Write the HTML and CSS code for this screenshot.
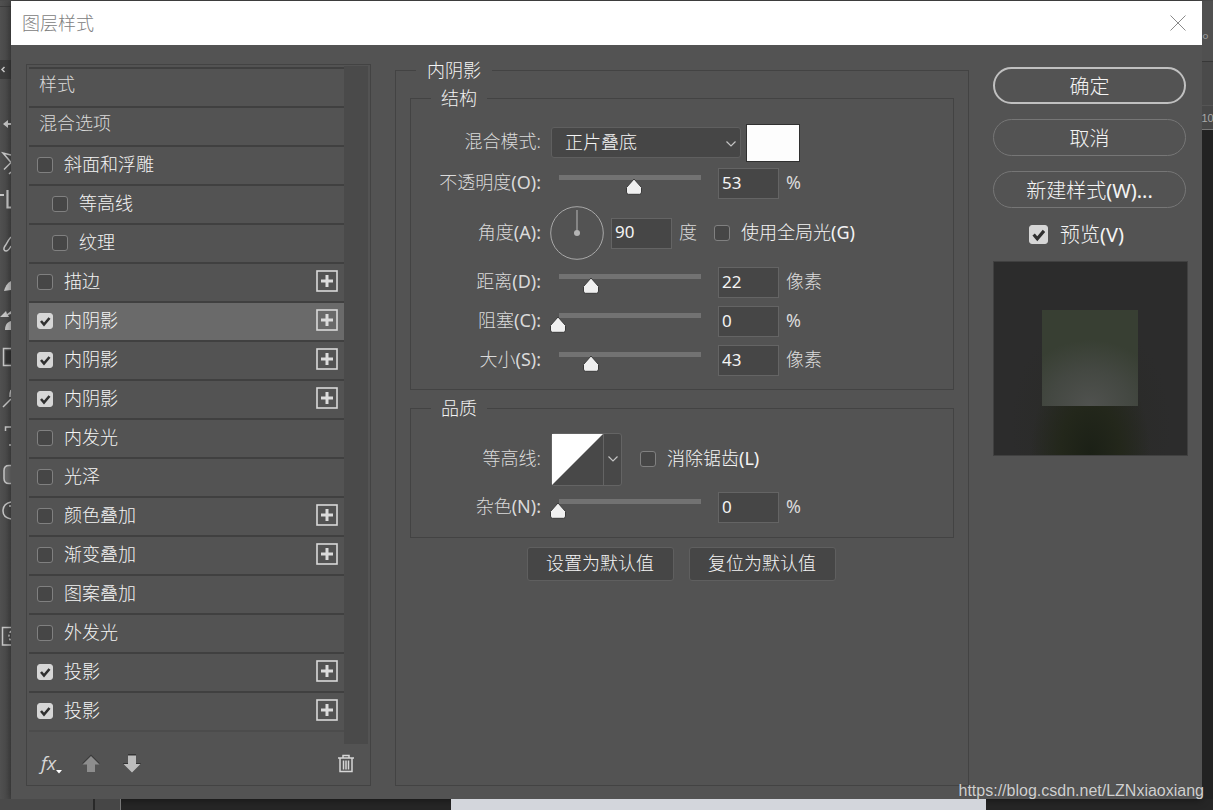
FILE: index.html
```html
<!DOCTYPE html>
<html lang="zh-CN">
<head>
<meta charset="utf-8">
<meta name="viewport" content="width=device-width, initial-scale=1">
<title>图层样式</title>
<link rel="stylesheet" href="styles.css">
</head>
<body>
<svg class="defs" aria-hidden="true">
  <symbol id="plus" viewBox="0 0 22 22"><rect x="1" y="1" width="20" height="20" fill="none" stroke="#d9d9d9" stroke-width="1.6"/><path d="M11 5v12M5 11h12" stroke="#dcdcdc" stroke-width="3" fill="none"/></symbol>
  <symbol id="chevron" viewBox="0 0 10 6"><path d="M.5 .5 5 5 9.500 .5" fill="none" stroke="#c4c4c4" stroke-width="1.2"/></symbol>
</svg>
<div class="workspace">
  <div class="app-top"></div>
  <aside class="rail">
    <svg class="rail-art" width="11" height="798" viewBox="0 1 11 798" fill="none" stroke="#c8c8c8" stroke-width="1.5">
      <path d="M0 6.500h11" stroke="#3c3c3c" stroke-width="1"/>
      <path d="M0 60h11v19H0z" fill="#3c3c3c" stroke="none"/>
      <path d="M4.500 67 2 69.500 4.500 72"/>
      <path d="M3 124l5-4v3h3v2H8v3z" fill="#c8c8c8" stroke="none"/>
      <path d="M11 155 3 153l8 9.500-7 7M9 174l2-2"/>
      <path d="M0 195h4M7.500 190v17.500H11" stroke-width="2.200"/>
      <path d="M11 237c-2 2-4 6-6 9s-1 5 1 5 4-3 5-5"/>
      <path d="M4 291c1-4 3-8 7-10v9z" fill="#c8c8c8" stroke="none"/>
      <path d="M0 317l6-6 1 3 4-3v3l-3 1 1 2z" fill="#c8c8c8" stroke="none"/>
      <path d="M5 330c0-5 2-8 6-9v9z" fill="#c8c8c8" stroke="none"/>
      <path d="M11 348.500H3.500v17H11"/>
      <path d="M5.500 350.500H11v13H5.500z" fill="#333" stroke="none"/>
      <path d="M3 407l8-8M10 397c0-3 0-5 1-7"/>
      <path d="M5.500 431v-4H11M9 445h2"/>
      <path d="M11 465.500H9q-5 0-5 5v8q0 5 5 5h2" fill="#6b6b6b"/>
      <path d="M11 502c-5 1-8 4-8 9s3 7 8 8M9 506h2"/>
      <path d="M11 627.500H2.500v17.500H11"/>
      <path d="M11 631q-4 5 0 10" stroke-dasharray="2 2"/>
    </svg>
  </aside>

  <main class="dialog">
    <header class="titlebar">
      <h1 class="title">图层样式</h1>
      <button class="close" type="button" aria-label="关闭"><svg width="16" height="16" viewBox="0 0 16 16"><path d="M.5 .5l15 15M15.500 .5l-15 15" stroke="#8a8a8a" fill="none"/></svg></button>
    </header>

    <form class="content">
      <section class="styles">
        <div class="list-wrap">
          <ul class="list">
            <li class="row row-text">样式</li>
            <li class="row row-text">混合选项</li>
            <li class="row"><label class="check"><input class="box" type="checkbox">斜面和浮雕</label></li>
            <li class="row row-sub"><label class="check"><input class="box" type="checkbox">等高线</label></li>
            <li class="row row-sub"><label class="check"><input class="box" type="checkbox">纹理</label></li>
            <li class="row"><label class="check"><input class="box" type="checkbox">描边</label><button class="add" type="button" aria-label="添加描边"><svg width="22" height="22"><use href="#plus"/></svg></button></li>
            <li class="row row-selected"><label class="check"><input class="box" type="checkbox" checked>内阴影</label><button class="add" type="button" aria-label="添加内阴影"><svg width="22" height="22"><use href="#plus"/></svg></button></li>
            <li class="row"><label class="check"><input class="box" type="checkbox" checked>内阴影</label><button class="add" type="button" aria-label="添加内阴影"><svg width="22" height="22"><use href="#plus"/></svg></button></li>
            <li class="row"><label class="check"><input class="box" type="checkbox" checked>内阴影</label><button class="add" type="button" aria-label="添加内阴影"><svg width="22" height="22"><use href="#plus"/></svg></button></li>
            <li class="row"><label class="check"><input class="box" type="checkbox">内发光</label></li>
            <li class="row"><label class="check"><input class="box" type="checkbox">光泽</label></li>
            <li class="row"><label class="check"><input class="box" type="checkbox">颜色叠加</label><button class="add" type="button" aria-label="添加颜色叠加"><svg width="22" height="22"><use href="#plus"/></svg></button></li>
            <li class="row"><label class="check"><input class="box" type="checkbox">渐变叠加</label><button class="add" type="button" aria-label="添加渐变叠加"><svg width="22" height="22"><use href="#plus"/></svg></button></li>
            <li class="row"><label class="check"><input class="box" type="checkbox">图案叠加</label></li>
            <li class="row"><label class="check"><input class="box" type="checkbox">外发光</label></li>
            <li class="row"><label class="check"><input class="box" type="checkbox" checked>投影</label><button class="add" type="button" aria-label="添加投影"><svg width="22" height="22"><use href="#plus"/></svg></button></li>
            <li class="row"><label class="check"><input class="box" type="checkbox" checked>投影</label><button class="add" type="button" aria-label="添加投影"><svg width="22" height="22"><use href="#plus"/></svg></button></li>
          </ul>
          <div class="scrollbar"></div>
        </div>
        <div class="tools">
          <button class="tool tool-fx" type="button"><span class="fx">fx</span><svg width="6" height="4" viewBox="0 0 6 4"><path d="M0 0h6L3 3.500z" fill="#fff"/></svg></button>
          <button class="tool" type="button" aria-label="上移"><svg width="18" height="19" viewBox="0 0 18 19"><path d="M0 9.500 9 .5l9 9z" fill="#3a3a3a"/><path d="M.5 10.500 9 2l8.500 8.500H13V18H5v-7.500z" fill="#8d8d8d"/></svg></button>
          <button class="tool" type="button" aria-label="下移"><svg width="18" height="19" viewBox="0 0 18 19"><path d="M5 0h8v9h5l-1 2H1L0 9h5z" fill="#333"/><path d="M5 1.500h8V10h4.500L9 18.500.5 10H5z" fill="#bdbdbd"/></svg></button>
          <button class="tool tool-trash" type="button" aria-label="删除"><svg width="16" height="19" viewBox="0 0 16 19" fill="none" stroke="#d6d6d6" stroke-width="1.500"><path d="M0 4h16M5 4V1.500h6V4M2 4v13.500h12V4M5.500 6.500v9M8 6.500v9M10.500 6.500v9"/></svg></button>
        </div>
      </section>

      <fieldset class="group group-main">
        <legend class="legend">内阴影</legend>
        <fieldset class="group group-structure">
          <legend class="legend legend-inner">结构</legend>
          <div class="field field-blend">
            <label class="name" for="blend">混合模式:</label>
            <div class="controls">
              <span class="select-wrap"><select class="select" id="blend"><option>正片叠底</option></select><svg class="select-arrow" width="10" height="6"><use href="#chevron"/></svg></span>
              <button class="swatch" type="button" aria-label="阴影颜色"></button>
            </div>
          </div>
          <div class="field">
            <label class="name" for="opacity">不透明度<span class="key">(O):</span></label>
            <div class="controls"><input class="slider" type="range" min="0" max="100" value="53" aria-label="不透明度"><input class="number" id="opacity" type="text" value="53"><span class="unit key">%</span></div>
          </div>
          <div class="field field-angle">
            <label class="name" for="angle">角度<span class="key">(A):</span></label>
            <div class="controls">
              <svg class="dial" width="54" height="54" viewBox="0 0 54 54"><circle cx="27" cy="27" r="26.300" fill="none" stroke="#a8a8a8"/><path d="M27 4v23" stroke="#8c8c8c" stroke-width="1.800"/><circle cx="27" cy="27" r="3" fill="#b4b4b4"/></svg>
              <input class="number" id="angle" type="text" value="90"><span class="unit">度</span>
              <label class="check check-angle"><input class="box" type="checkbox"><span class="caption">使用全局光<span class="key">(G)</span></span></label>
            </div>
          </div>
          <div class="field">
            <label class="name" for="distance">距离<span class="key">(D):</span></label>
            <div class="controls"><input class="slider" type="range" min="0" max="95" value="22" aria-label="距离"><input class="number" id="distance" type="text" value="22"><span class="unit">像素</span></div>
          </div>
          <div class="field">
            <label class="name" for="choke">阻塞<span class="key">(C):</span></label>
            <div class="controls"><input class="slider" type="range" min="0" max="100" value="0" aria-label="阻塞"><input class="number" id="choke" type="text" value="0"><span class="unit key">%</span></div>
          </div>
          <div class="field">
            <label class="name" for="size">大小<span class="key">(S):</span></label>
            <div class="controls"><input class="slider" type="range" min="0" max="187" value="43" aria-label="大小"><input class="number" id="size" type="text" value="43"><span class="unit">像素</span></div>
          </div>
        </fieldset>

        <fieldset class="group group-quality">
          <legend class="legend legend-inner">品质</legend>
          <div class="field field-contour">
            <span class="name">等高线:</span>
            <div class="controls">
              <button class="contour" type="button" aria-label="等高线"><svg class="contour-curve" width="51" height="51" viewBox="0 0 51 51"><path d="M0 0h51L0 51z" fill="#fff"/></svg><span class="contour-drop"><svg width="10" height="6"><use href="#chevron"/></svg></span></button>
              <label class="check check-contour"><input class="box" type="checkbox"><span class="caption">消除锯齿<span class="key">(L)</span></span></label>
            </div>
          </div>
          <div class="field">
            <label class="name" for="noise">杂色<span class="key">(N):</span></label>
            <div class="controls"><input class="slider" type="range" min="0" max="100" value="0" aria-label="杂色"><input class="number" id="noise" type="text" value="0"><span class="unit key">%</span></div>
          </div>
        </fieldset>
        <div class="defaults">
          <button class="btn" type="button">设置为默认值</button>
          <button class="btn" type="button">复位为默认值</button>
        </div>
      </fieldset>

      <section class="side">
        <button class="pill pill-primary" type="button">确定</button>
        <button class="pill" type="button">取消</button>
        <button class="pill" type="button">新建样式<span class="key">(W)...</span></button>
        <label class="check check-preview"><input class="box box-large" type="checkbox" checked><span>预览<span class="key">(V)</span></span></label>
        <div class="preview"><div class="preview-square"></div></div>
      </section>
    </form>
  </main>

  <aside class="edge">
    <div class="edge-bar">°</div>
    <div class="edge-tabs"></div>
    <div class="edge-ruler"><span class="edge-mark">10</span></div>
  </aside>
  <div class="app-bottom"><div class="bottom-rail"></div><div class="bottom-ruler"></div><div class="bottom-dark"></div><div class="bottom-canvas"></div></div>
  <div class="watermark">https://blog.csdn.net/LZNxiaoxiang</div>
</div>
</body>
</html>
```
FILE: styles.css
```css
* { box-sizing: border-box; }

body {
  margin: 0;
  background: #262626;
  color: #f4f4f4;
  font: 300 18px/20px "Noto Sans", "Noto Sans CJK SC", sans-serif;
}

button, input, select { font: inherit; color: inherit; margin: 0; }
button { padding: 0; border: 0; background: none; }
svg { display: block; }
.defs { position: absolute; width: 0; height: 0; }
.key { font-weight: 400; }

.workspace {
  position: relative;
  display: grid;
  grid-template-columns: 11px minmax(0, 1fr) 11px;
  grid-template-rows: 1px 1fr 11px;
  min-height: 100vh;
  overflow: hidden;
}
.app-top { grid-column: 1 / -1; background: #4a4a4a; }
.rail { background: linear-gradient(90deg, #505050, #484848); overflow: hidden; }

/* Dialog window */
.dialog {
  display: flex;
  flex-direction: column;
  background: #535353;
  box-shadow: 0 1px 8px rgba(0, 0, 0, .45);
}
.titlebar {
  display: flex;
  align-items: center;
  justify-content: space-between;
  height: 44px;
  padding: 0 16px 1px 11px;
  background: #fff;
}
.title { margin: 0; font-size: 18px; font-weight: 300; color: #808080; }
.content {
  flex: 1;
  display: grid;
  grid-template-columns: 345px minmax(0, 1fr) 195px;
  gap: 24px;
  padding: 15px 14px 13px 15px;
}

/* Style list */
.styles {
  display: flex;
  flex-direction: column;
  margin-top: 4px;
  padding: 1px 2px;
  border: 1px solid #434343;
}
.list-wrap { display: flex; }
.list {
  flex: 1;
  margin: 0;
  padding: 1px 0 0;
  list-style: none;
}
.row {
  display: flex;
  align-items: center;
  justify-content: space-between;
  height: 39px;
  padding: 0 6px 4px 8px;
  border-bottom: 2px solid #404040;
}
.row:first-child { height: 41px; border-top: 2px solid #404040; }
.row:last-child { border-bottom-color: #4c4c4c; }
.row-text { padding: 0 10px 7px; color: #dadada; }
.row-sub { padding-left: 23px; }
.row-selected { background: #6a6a6a; }
.check { display: flex; align-items: center; gap: 11px; }
.box {
  appearance: none;
  flex: none;
  width: 16px;
  height: 16px;
  border: 1px solid #808080;
  border-radius: 3px;
  background: #464646;
}
.row .box { margin-top: 2px; }
.box:checked {
  border-color: #d6d6d6;
  background: #d6d6d6 url("data:image/svg+xml,%3Csvg xmlns='http://www.w3.org/2000/svg' viewBox='0 0 14 14'%3E%3Cpath d='M3 7l3 3.500 5.500-6.500' fill='none' stroke='%23303030' stroke-width='2.600'/%3E%3C/svg%3E") center / 100% no-repeat;
}
.scrollbar { width: 24px; margin-bottom: -12px; background: #4a4a4a; }
.tools {
  display: flex;
  align-items: center;
  gap: 23px;
  margin-top: auto;
  padding: 0 14px 10px 12px;
}
.tool-fx { display: flex; align-items: flex-end; width: 18px; color: #d6d6d6; }
.tool-fx svg { flex: none; }
.fx { font: italic 400 19px/22px "Open Sans", "Noto Sans", sans-serif; }
.tool-trash { margin-left: auto; }

/* Settings */
.group { min-width: 0; margin: 0; padding: 0; border: 1px solid #434343; }
.group-main { padding: 8px 14px 0; }
.group-main > .legend { margin-left: 6px; }
.group-structure { padding: 13px 0 9px; }
.group-quality { margin-top: 8px; padding: 12px 0 10px; }
.legend { margin-left: 20px; padding: 0 11px; }
.legend-inner { padding: 0 10px; }
.field {
  display: grid;
  grid-template-columns: 130px 1fr;
  gap: 9px;
  align-items: center;
  height: 39px;
}
.field-blend { height: 43px; }
.field-angle { height: 60px; }
.field-contour { height: 58px; }
.name { padding-bottom: 3px; color: #dadada; text-align: right; white-space: nowrap; }
.controls { display: flex; align-items: center; }
.unit { margin-left: 7px; padding-bottom: 3px; color: #dadada; }

.select-wrap { position: relative; width: 190px; margin: 0 5px 0 1px; }
.select {
  appearance: none;
  display: block;
  width: 100%;
  height: 31px;
  padding: 0 30px 2px 13px;
  border: 1px solid #5f5f5f;
  border-radius: 3px;
  background: #464646;
}
.select-arrow { position: absolute; right: 5px; top: 14px; pointer-events: none; }
.swatch { width: 54px; height: 38px; border: 1px solid #303030; background: #fdfdfd; }

.slider {
  appearance: none;
  width: 159px;
  height: 24px;
  margin-right: 9px;
  background: linear-gradient(#727272, #727272) 9px 3px / 142px 5px no-repeat;
}
.slider::-webkit-slider-runnable-track { height: 24px; }
.slider::-webkit-slider-thumb {
  appearance: none;
  width: 16px;
  height: 17px;
  margin-top: 6px;
  background: url("data:image/svg+xml,%3Csvg xmlns='http://www.w3.org/2000/svg' viewBox='0 0 16 17'%3E%3Cpath d='M8 1L15.500 9.500V14Q15.500 16.300 13.500 16.300H2.500Q.5 16.300 .5 14V9.500Z' fill='%23f0f0f0' stroke='%23393939'/%3E%3C/svg%3E") no-repeat;
}
.number {
  width: 61px;
  height: 31px;
  padding: 0 3px 3px;
  border: 1px solid #646464;
  background: #464646;
  font-size: 17px;
  font-weight: 400;
}
.dial { margin-right: 7px; }
.caption { padding-bottom: 3px; }
.check-angle { margin-left: 17px; }

.contour {
  display: flex;
  width: 71px;
  height: 53px;
  margin-left: 1px;
  border: 1px solid #646464;
  border-radius: 3px;
  background: #484848;
}
.contour-drop {
  display: grid;
  place-items: center;
  width: 18px;
  height: 51px;
  border-left: 1px solid #646464;
}
.check-contour { margin-left: 18px; }

.defaults { display: flex; justify-content: center; gap: 15px; margin: 9px 2px 0 0; }
.btn {
  width: 147px;
  height: 34px;
  padding-bottom: 2px;
  border: 1px solid #5f5f5f;
  border-radius: 3px;
  background: #464646;
}

/* Actions and preview */
.side { display: flex; flex-direction: column; gap: 15px; padding-top: 7px; font-size: 20px; }
.pill {
  height: 37px;
  padding-top: 2px;
  border: 1px solid #767676;
  border-radius: 19px;
  margin-right: 2px;
}
.pill-primary { border: 2px solid #c0c0c0; }
.check-preview { gap: 12px; margin-left: 36px; height: 23px; }
.box-large { width: 19px; height: 19px; }
.preview {
  display: grid;
  place-items: center;
  height: 195px;
  padding: 0 2px 2px 0;
  border: 1px solid #404040;
  background:
    radial-gradient(ellipse 60px 100px at 50% 100%, #1b2016 0%, #23271b 50%, transparent 100%),
    radial-gradient(ellipse 80px 110px at 50% 85%, #292a26, #2c2c2c);
}
.preview-square {
  width: 96px;
  height: 96px;
  background: radial-gradient(ellipse 74px 66px at 50% 100%, #50524f, #444842 55%, #383f33);
}

/* Application behind the dialog */
.edge {
  font-size: 16px;
  color: #a8a8a8;
  background: #222;
}
.edge-bar {
  height: 61px;
  padding-top: 29px;
  background: #505050;
  border-bottom: 1px solid #383838;
}
.edge-tabs { height: 43px; background: #4a4a4a; }
.edge-ruler {
  display: flex;
  justify-content: center;
  height: 25px;
  padding-top: 2px;
  background: #484848;
  border-top: 1px solid #555;
  border-bottom: 1px solid #777;
}
.edge-mark { font: 11px/20px "Liberation Sans", sans-serif; }
.app-bottom {
  grid-column: 1 / -1;
  display: grid;
  grid-template-columns: 95px 26px 330px minmax(0, 535px);
}
.bottom-rail { background: #4a4a4a; border-right: 2px solid #292929; }
.bottom-ruler { background: #464646; border-right: 1px solid #777; }
.bottom-canvas { background: #d3d6dc; }

.watermark {
  position: absolute;
  right: 9px;
  bottom: 9px;
  color: #d0d0d0;
  font: 16px/20px "Liberation Sans", sans-serif;
  text-shadow: 0 0 1px #444;
}
```
